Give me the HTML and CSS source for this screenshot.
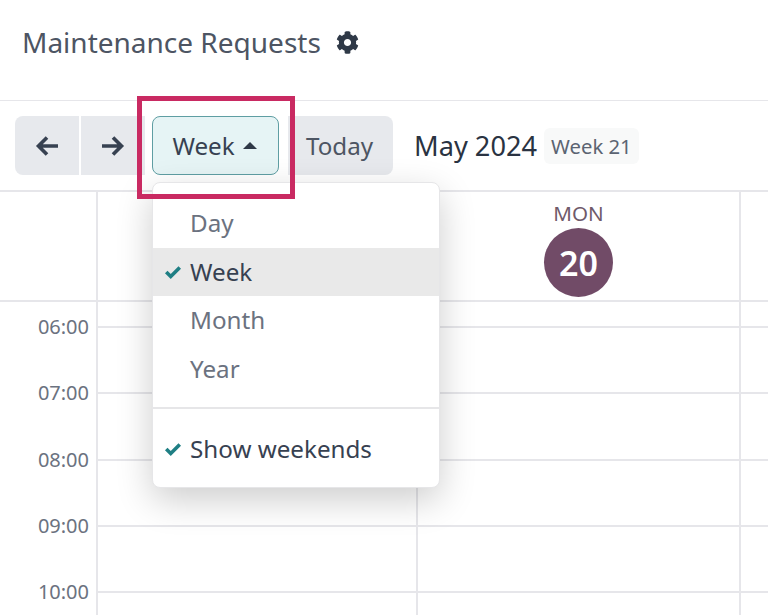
FILE: index.html
```html
<!DOCTYPE html>
<html>
<head>
    <meta charset="utf-8">
    <title>Maintenance Requests</title>
    <link rel="stylesheet" href="styles.css">
</head>
<body>
<header class="title-bar">
    <h1>Maintenance Requests</h1>
    <svg class="gear" viewBox="0 0 512 512"><path d="M487.4 315.7l-42.6-24.6c4.3-23.2 4.3-47 0-70.2l42.6-24.6c4.9-2.8 7.1-8.6 5.5-14-11.1-35.6-30-67.8-54.7-94.6-3.8-4.1-10-5.1-14.8-2.3L380.8 110c-17.9-15.4-38.5-27.3-60.8-35.1V25.8c0-5.6-3.9-10.5-9.4-11.7-36.7-8.2-74.3-7.8-109.2 0-5.5 1.2-9.4 6.1-9.4 11.7V75c-22.2 7.9-42.8 19.8-60.8 35.1L88.7 85.5c-4.9-2.8-11-1.9-14.8 2.3-24.7 26.7-43.6 58.9-54.7 94.6-1.7 5.4.6 11.2 5.5 14L67.3 221c-4.3 23.2-4.3 47 0 70.2l-42.6 24.6c-4.9 2.8-7.1 8.6-5.5 14 11.1 35.6 30 67.8 54.7 94.6 3.8 4.1 10 5.1 14.8 2.3l42.6-24.6c17.9 15.4 38.5 27.3 60.8 35.1v49.2c0 5.6 3.9 10.5 9.4 11.7 36.7 8.2 74.3 7.8 109.2 0 5.5-1.2 9.4-6.1 9.4-11.7v-49.2c22.2-7.9 42.8-19.8 60.8-35.1l42.6 24.6c4.9 2.8 11 1.9 14.8-2.3 24.7-26.7 43.6-58.9 54.7-94.6 1.5-5.5-.7-11.3-5.6-14.1zM256 336c-44.1 0-80-35.9-80-80s35.9-80 80-80 80 35.9 80 80-35.9 80-80 80z"/></svg>
</header>

<div class="toolbar">
    <div class="btn-group">
        <button class="btn btn-arrow">
            <svg viewBox="0 0 24 24"><path d="M23 12H3M12 3.500l-8.500 8.500 8.500 8.500"/></svg>
        </button>
        <button class="btn btn-arrow">
            <svg viewBox="0 0 24 24"><path d="M1 12h20M12 3.500l8.500 8.500-8.500 8.500"/></svg>
        </button>
    </div>
    <button class="btn btn-week">Week <span class="caret"></span></button>
    <button class="btn btn-today">Today</button>
    <span class="period">May 2024</span>
    <span class="week-badge">Week 21</span>
</div>

<main class="calendar">
    <div class="cal-head">
        <div class="cell"></div>
        <div class="cell"></div>
        <div class="cell day-today">
            <span class="day-name">MON</span>
            <span class="day-num">20</span>
        </div>
        <div class="cell"></div>
    </div>
    <div class="cal-body">
        <div class="hour-first"></div>
        <div class="hour"><span>06:00</span></div>
        <div class="hour"><span>07:00</span></div>
        <div class="hour"><span>08:00</span></div>
        <div class="hour"><span>09:00</span></div>
        <div class="hour"><span>10:00</span></div>
    </div>
</main>

<div class="dropdown">
    <div class="item">Day</div>
    <div class="item selected">
        <svg class="check" viewBox="0 0 16 16"><path d="M2 8l4 4 8-8"/></svg>
        Week
    </div>
    <div class="item">Month</div>
    <div class="item">Year</div>
    <div class="divider"></div>
    <div class="item checked">
        <svg class="check" viewBox="0 0 16 16"><path d="M2 8l4 4 8-8"/></svg>
        Show weekends
    </div>
</div>

<div class="highlight"></div>
</body>
</html>
```

FILE: styles.css
```css
:root {
    --text-color: #374151;
    --muted-color: #6b7280;
    --line-color: #e6e6ea;
    --button-color: #e7e9ed;
    --teal-color: #1f7f84;
    --accent-color: #714b67;
}

html, body {
    margin: 0;
    padding: 0;
    height: 615px;
    overflow: hidden;
    background-color: #fff;
}

body {
    position: relative;
    font-family: "Noto Sans", "Open Sans", sans-serif;
    color: var(--text-color);
}

.title-bar {
    display: flex;
    align-items: center;
    gap: 15px;
    height: 101px;
    padding: 0 0 17px 22px;
    box-sizing: border-box;
    border-bottom: 1px solid var(--line-color);
}

.title-bar h1 {
    margin: 0;
    font-size: 28px;
    font-weight: 400;
    color: #4d5563;
}

.gear {
    width: 23px;
    height: 23px;
    margin-top: 2px;
    fill: #2f3947;
}

.toolbar {
    display: flex;
    align-items: center;
    height: 89px;
    padding-left: 15px;
    box-sizing: border-box;
}

.btn {
    display: flex;
    align-items: center;
    justify-content: center;
    height: 59px;
    border: 0;
    padding: 0;
    background-color: var(--button-color);
    font-family: inherit;
    font-size: 24.2px;
    color: var(--text-color);
}

.btn-group {
    display: flex;
    gap: 2px;
}

.btn-arrow {
    width: 64px;
}

.btn-group .btn-arrow:first-child {
    border-radius: 8px 0 0 8px;
}

.btn-arrow svg {
    width: 24px;
    height: 24px;
    fill: none;
    stroke: #374151;
    stroke-width: 3.6;
}

.btn-week {
    width: 127px;
    margin-left: 7px;
    padding-right: 2px;
    gap: 8px;
    box-sizing: border-box;
    border: 1px solid #5f9ea3;
    border-radius: 8px;
    background-color: #e6f4f5;
}

.caret {
    width: 0;
    height: 0;
    border-left: 7px solid transparent;
    border-right: 7px solid transparent;
    border-bottom: 7px solid #2f3947;
}

.btn-today {
    width: 105px;
    margin-left: 9px;
    padding-right: 2px;
    border-radius: 0 8px 8px 0;
    color: #4d5563;
}

.period {
    margin-left: 21px;
    font-size: 27.2px;
    color: #2a3342;
}

.week-badge {
    margin-left: 7px;
    padding: 4px 7px;
    border-radius: 6px;
    background-color: #f8f9f9;
    font-size: 20.3px;
    color: #5b6472;
}

.calendar {
    height: 425px;
    box-sizing: border-box;
    overflow: hidden;
    border-top: 2px solid var(--line-color);
}

.cal-head {
    display: grid;
    grid-template-columns: 98px 320px 323px 1fr;
    height: 110px;
    border-bottom: 2px solid var(--line-color);
    box-sizing: border-box;
}

.cell {
    border-right: 2px solid var(--line-color);
}

.cell:last-child {
    border-right: 0;
}

.day-today {
    display: flex;
    flex-direction: column;
    align-items: center;
    padding-top: 6px;
    color: #6f5a6a;
}

.day-name {
    font-size: 20.6px;
    line-height: 30px;
}

.day-num {
    display: flex;
    align-items: center;
    justify-content: center;
    width: 69px;
    height: 69px;
    border-radius: 50%;
    background-color: var(--accent-color);
    color: #fff;
    font-size: 34px;
    font-weight: 600;
}

.cal-body {
    background-image: linear-gradient(var(--line-color), var(--line-color)), linear-gradient(var(--line-color), var(--line-color)), linear-gradient(var(--line-color), var(--line-color));
    background-size: 2px 100%;
    background-position: 96px 0, 416px 0, 739px 0;
    background-repeat: no-repeat;
}

.hour-first {
    height: 24px;
}

.hour {
    position: relative;
    height: 66.25px;
    box-sizing: border-box;
    margin-left: 97px;
    border-top: 2px solid var(--line-color);
}

.hour span {
    position: absolute;
    right: 100%;
    top: -16px;
    margin-right: 8px;
    font-size: 20px;
    line-height: 30px;
    color: var(--muted-color);
}

.dropdown {
    position: absolute;
    left: 152px;
    top: 182px;
    width: 288px;
    box-sizing: border-box;
    padding: 16px 0 13px;
    border: 1px solid #e6e6e8;
    border-radius: 8px;
    background-color: #fff;
    box-shadow: 0 12px 36px rgba(0, 0, 0, 0.2);
}

.item {
    position: relative;
    height: 48.5px;
    line-height: 48.5px;
    padding-left: 37px;
    font-size: 24.2px;
    color: var(--muted-color);
}

.item.selected {
    background-color: #e9e9e9;
    color: var(--text-color);
}

.item.checked {
    color: var(--text-color);
}

.check {
    position: absolute;
    left: 11px;
    top: 15px;
    width: 18px;
    height: 18px;
    fill: none;
    stroke: var(--teal-color);
    stroke-width: 3.2;
}

.divider {
    margin: 14px 0 16px;
    border-top: 2px solid #e6e6e8;
}

.highlight {
    position: absolute;
    left: 137px;
    top: 96px;
    width: 158px;
    height: 103px;
    box-sizing: border-box;
    border: 5px solid #c92a62;
}
```
